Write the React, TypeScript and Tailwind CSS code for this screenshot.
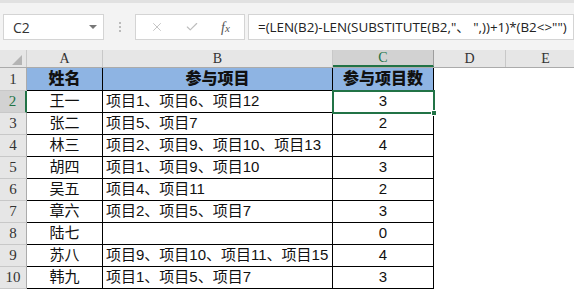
import { Check, X } from 'lucide-react'

const rows: [string, string, number][] = [
  ['王一', '项目1、项目6、项目12', 3],
  ['张二', '项目5、项目7', 2],
  ['林三', '项目2、项目9、项目10、项目13', 4],
  ['胡四', '项目1、项目9、项目10', 3],
  ['吴五', '项目4、项目11', 2],
  ['章六', '项目2、项目5、项目7', 3],
  ['陆七', '', 0],
  ['苏八', '项目9、项目10、项目11、项目15', 4],
  ['韩九', '项目1、项目5、项目7', 3],
]

const cellFont = { fontFamily: '"Liberation Sans", "Noto Sans CJK SC", sans-serif' }
const headFont = { fontFamily: '"Liberation Serif", "DejaVu Serif", serif' }
const uiFont = { fontFamily: '"Open Sans", "Liberation Sans", "Noto Sans CJK SC", sans-serif' }

function ColHead({ label, w, selected }: { label: string; w: string; selected?: boolean }) {
  return (
    <div
      className={`${w} flex h-full shrink-0 items-center justify-center border-r text-[14px] ${
        selected
          ? 'border-r-[#9e9e9e] border-b-2 border-b-[#217346] bg-[#d2d2d2] text-[#217346]'
          : 'border-r-[#c8c8c8] text-[#333]'
      }`}
      style={headFont}
    >
      {label}
    </div>
  )
}

export default function App() {
  return (
    <div className="relative h-[290px] w-[574px] overflow-hidden bg-white">
      {/* formula bar */}
      <div className="h-[50px] border-t-[3px] border-[#e1e1e1] bg-[#f3f3f3]">
        <div className="mt-[11px] flex h-[26px] items-stretch">
          <div className="ml-[3px] flex w-[101px] items-center justify-between border border-[#d4d4d4] bg-white pl-[9px] pr-[6px]">
            <span className="text-[14px] text-[#333]" style={uiFont}>
              C2
            </span>
            <span className="h-0 w-0 border-x-[4px] border-t-[4px] border-x-transparent border-t-[#777]" />
          </div>
          <div className="flex w-[31px] flex-col items-center justify-center gap-[2px]">
            <span className="h-[2px] w-[2px] bg-[#bbb]" />
            <span className="h-[2px] w-[2px] bg-[#bbb]" />
            <span className="h-[2px] w-[2px] bg-[#bbb]" />
          </div>
          <div className="flex w-[110px] items-center border border-[#d4d4d4] bg-white">
            <X className="ml-[14px] h-[14px] w-[14px] text-[#bdbdbd]" strokeWidth={1.5} />
            <Check className="ml-[21px] h-[14px] w-[14px] text-[#bdbdbd]" strokeWidth={2} />
            <span className="ml-[22px] text-[14px] italic text-[#555]" style={headFont}>
              f<span className="text-[11px]">x</span>
            </span>
          </div>
          <div className="ml-[3px] flex flex-1 items-center overflow-hidden border border-[#d4d4d4] bg-white pl-[9px]">
            <span className="whitespace-nowrap text-[13.4px] text-[#222]" style={uiFont}>
              =(LEN(B2)-LEN(SUBSTITUTE(B2,"、 ",))+1)*(B2&lt;&gt;"")
            </span>
          </div>
        </div>
      </div>

      {/* column headers */}
      <div className="flex h-[18px] border-b border-[#ababab] bg-[#e6e6e6]">
        <div className="relative h-full w-[27px] shrink-0 border-r border-[#c8c8c8]">
          <span className="absolute bottom-[2px] right-[4px] h-0 w-0 border-b-[10px] border-l-[10px] border-b-[#b4b4b4] border-l-transparent" />
        </div>
        <ColHead label="A" w="w-[76px]" />
        <ColHead label="B" w="w-[230px]" />
        <ColHead label="C" w="w-[101px]" selected />
        <ColHead label="D" w="w-[72px]" />
        <ColHead label="E" w="w-[80px]" />
      </div>

      {/* header row 1 */}
      <div className="flex h-[23px]">
        <div
          className="flex w-[27px] shrink-0 items-center justify-center border-r border-b border-[#c8c8c8] border-r-[#ababab] bg-[#e6e6e6] text-[15px] text-[#333]"
          style={headFont}
        >
          1
        </div>
        {[
          ['姓名', 'w-[76px]'],
          ['参与项目', 'w-[230px]'],
          ['参与项目数', 'w-[101px]'],
        ].map(([t, w]) => (
          <div
            key={t}
            className={`${w} flex shrink-0 items-center justify-center border-r border-b border-black bg-[#8eb4e3] text-[16px] font-black text-[#111]`}
            style={cellFont}
          >
            {t}
          </div>
        ))}
      </div>

      {/* data rows */}
      {rows.map(([name, items, n], i) => (
        <div key={name} className="flex h-[22px]">
          <div
            className={`flex w-[27px] shrink-0 items-center justify-center border-b border-[#c8c8c8] text-[15px] ${
              i === 0
                ? 'border-r-2 border-r-[#217346] bg-[#d2d2d2] text-[#217346]'
                : 'border-r border-r-[#ababab] bg-[#e6e6e6] text-[#333]'
            }`}
            style={headFont}
          >
            {i + 2}
          </div>
          <div
            className="flex w-[76px] shrink-0 items-center justify-center border-r border-b border-black text-[15px] text-[#111]"
            style={cellFont}
          >
            {name}
          </div>
          <div
            className="flex w-[230px] shrink-0 items-center overflow-hidden whitespace-nowrap border-r border-b border-black pl-[3px] text-[15px] text-[#111]"
            style={cellFont}
          >
            {items}
          </div>
          <div
            className="flex w-[101px] shrink-0 items-center justify-center border-r border-b border-black text-[15px] text-[#111]"
            style={cellFont}
          >
            {n}
          </div>
        </div>
      ))}

      {/* active cell C2 */}
      <div className="absolute left-[332px] top-[90px] h-[24px] w-[103px] border-2 border-[#217346]">
        <span className="absolute -bottom-[4px] -right-[4px] h-[6px] w-[6px] border border-white bg-[#217346]" />
      </div>
    </div>
  )
}
